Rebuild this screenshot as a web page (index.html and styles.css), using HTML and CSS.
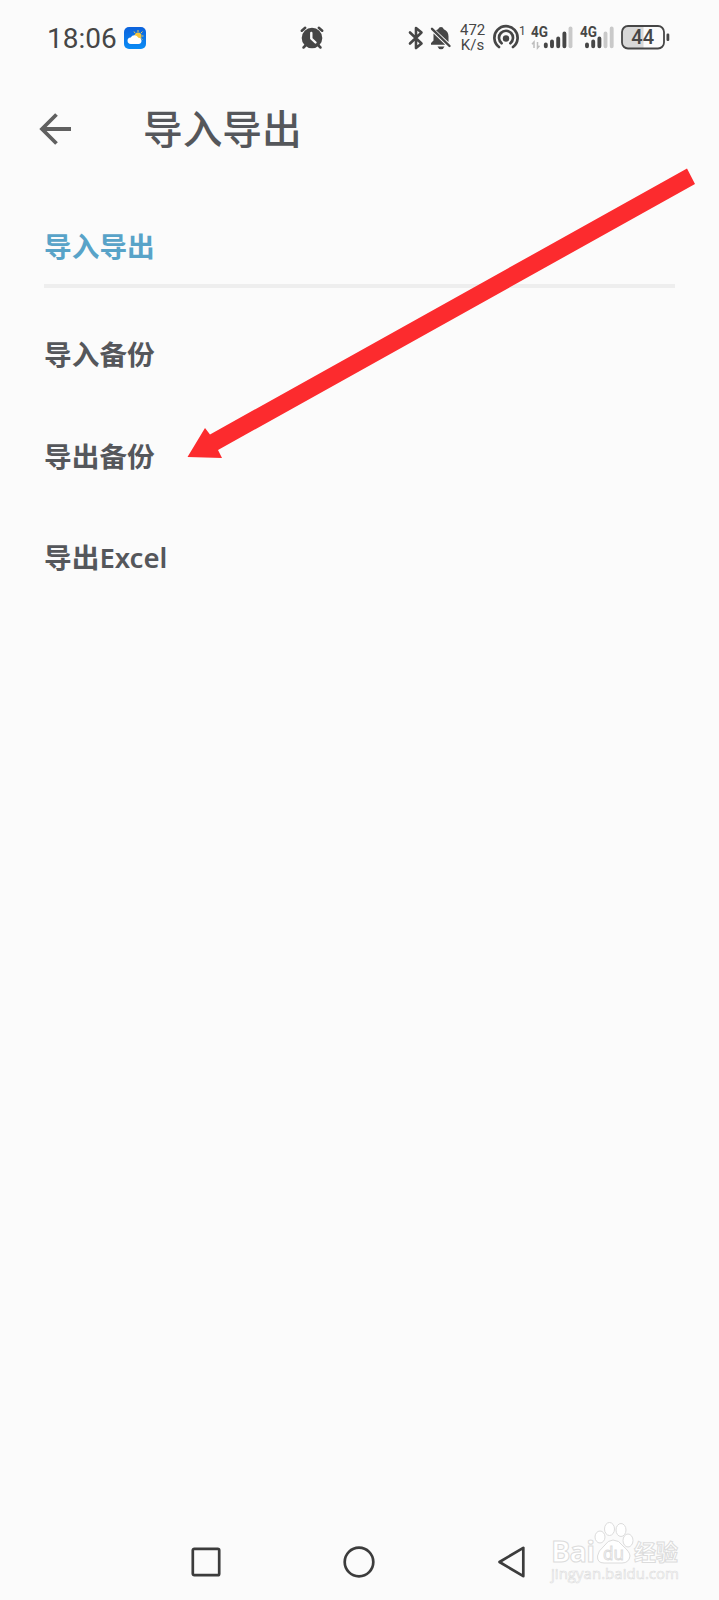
FILE: index.html
```html
<!DOCTYPE html>
<html lang="zh-CN">
<head>
  <meta charset="UTF-8">
  <meta name="viewport" content="width=device-width, initial-scale=1.0">
  <title>导入导出</title>
  <link rel="stylesheet" href="styles.css">
</head>
<body>
  <div class="screen">
    <div class="statusbar">
      <span class="time">18:06</span>
      <svg class="weather" width="22" height="22" viewBox="0 0 22 22">
        <defs>
          <linearGradient id="sky" x1="0" y1="0" x2="0" y2="1">
            <stop offset="0" stop-color="#0c62dc"/>
            <stop offset="1" stop-color="#0b8cf5"/>
          </linearGradient>
        </defs>
        <rect width="22" height="22" rx="5" fill="url(#sky)"/>
        <path d="M14 3v2M18.500 4.500l-1.500 1.500M19.500 9h-1.500M10 4.500l1 1.500M18.500 12.500l-1-1" stroke="#f5c84a" stroke-width="1"/>
        <circle cx="14" cy="9" r="3.500" fill="#f8c63d"/>
        <path d="M7 17a3.300 3.300 0 0 1-.3-6.600A4.300 4.300 0 0 1 14.300 10.800A3.100 3.100 0 0 1 14.500 17z" fill="#fff"/>
      </svg>
      <svg class="alarm" width="24" height="24" viewBox="0 0 24 24">
        <path d="M1.800 4.800L5.200 1.800M22.200 4.800L18.800 1.800M5.500 19.500L3.500 21.500M18.500 19.500L20.500 21.500" stroke="#464646" stroke-width="2.500" stroke-linecap="round"/>
        <circle cx="12" cy="12" r="10.300" fill="#464646"/>
        <path d="M11.300 7V12.500L15.500 16.500" fill="none" stroke="#fbfbfb" stroke-width="2.400" stroke-linecap="round"/>
      </svg>
      <div class="tray">
        <svg class="bluetooth" width="16" height="24" viewBox="0 0 16 24">
          <path d="M2 6.500L13.500 17.500L8 22V2L13.500 6.500L2 17.500" fill="none" stroke="#464646" stroke-width="2.600" stroke-linejoin="round" stroke-linecap="round"/>
        </svg>
        <svg class="bell" width="22" height="24" viewBox="0 0 22 24">
          <path d="M8 3.300Q9 1 11 1T13.800 3.300Q18.500 5.300 18.500 10.500V16L6 4.300Q7 3.600 8 3.300zM3.500 7.500L15.200 18.800H1V17L3.500 14.500z" fill="#464646"/>
          <path d="M2 2.800L19.500 20" stroke="#464646" stroke-width="2.400" stroke-linecap="round"/>
          <path d="M7.500 20.500h7q-1 2.800-3.500 2.800t-3.500-2.800z" fill="#464646"/>
        </svg>
        <div class="speed"><span>472</span><span>K/s</span></div>
        <svg class="hotspot" width="34" height="24" viewBox="0 0 34 24">
          <g fill="none" stroke="#464646" stroke-width="2.700" stroke-linecap="round">
            <path d="M6 21A11.600 11.600 0 1 1 20 21"/>
            <path d="M8.600 17.200A7 7 0 1 1 17.400 17.200"/>
          </g>
          <circle cx="13" cy="12.500" r="3.200" fill="#464646"/>
          <text x="26" y="9" class="tiny">1</text>
        </svg>
        <svg class="signal" width="42" height="26" viewBox="0 0 42 26">
          <text x="0" y="11.500" class="net" textLength="17" lengthAdjust="spacingAndGlyphs">4G</text>
          <path d="M3 23v-6l-2 2.200M6.500 17v6l2-2.200" fill="none" stroke="#bdbdbd" stroke-width="1.500"/>
          <g stroke="#464646" stroke-width="3.900" stroke-linecap="round">
            <path d="M14.800 19.500v1.700M21 16.500v4.700M27.200 13.500v7.700M33.400 8.500v12.700"/>
            <path d="M39.500 3.500v17.700" stroke="#c9c9c9"/>
          </g>
        </svg>
        <svg class="signal second" width="34" height="26" viewBox="0 0 34 26">
          <text x="0" y="11.500" class="net" textLength="17" lengthAdjust="spacingAndGlyphs">4G</text>
          <g stroke="#464646" stroke-width="3.900" stroke-linecap="round">
            <path d="M7 19.500v1.700M13.200 16.500v4.700M19.400 13.500v7.700"/>
            <path d="M25.500 8.500v12.700M31.700 3.500v17.700" stroke="#c9c9c9"/>
          </g>
        </svg>
        <svg class="battery" width="49" height="26" viewBox="0 0 49 26">
          <rect x="1" y="1" width="42" height="22.500" rx="6" fill="#fbfbfb"/>
          <path d="M7 1h15.500v22.500H7a6 6 0 0 1-6-6V7a6 6 0 0 1 6-6z" fill="#d8d8d8"/>
          <rect x="1" y="1" width="42" height="22.500" rx="6" fill="none" stroke="#464646" stroke-width="1.800"/>
          <rect x="45.500" y="8.500" width="2.800" height="7.500" rx="1.200" fill="#464646"/>
          <text x="21.700" y="19" class="level" textLength="23">44</text>
        </svg>
      </div>
    </div>

    <div class="header">
      <svg class="back" width="34" height="34" viewBox="0 0 34 34">
        <path d="M32 17H3M17.500 2.500L3 17L17.500 31.500" fill="none" stroke="#606060" stroke-width="3.800"/>
      </svg>
      <h1>导入导出</h1>
    </div>

    <div class="content">
      <h2>导入导出</h2>
      <ul class="list">
        <li>导入备份</li>
        <li>导出备份</li>
        <li>导出<span class="latin">Excel</span></li>
      </ul>
    </div>

    <div class="navbar">
      <svg width="32" height="32" viewBox="0 0 32 32"><rect x="2.800" y="2.800" width="26.400" height="26.400" rx="1.500"/></svg>
      <svg width="32" height="32" viewBox="0 0 32 32"><circle cx="16" cy="16" r="14.300"/></svg>
      <svg width="32" height="32" viewBox="0 0 32 32"><path d="M27.300 1.800V30.200L3.500 16z"/></svg>
    </div>

    <svg class="arrow" width="719" height="480" viewBox="0 0 719 480">
      <path d="M187.500 457L205 428L210 434.500L687 168.500L695 184L218 450L222 458z" fill="#fc2b2e"/>
    </svg>

    <svg class="watermark" width="140" height="70" viewBox="0 0 140 70">
      <text x="1" y="42" class="wm-logo" textLength="44">Bai</text>
      <g class="paw">
        <ellipse cx="50" cy="17" rx="5" ry="6"/>
        <ellipse cx="59.500" cy="9" rx="5" ry="6.500"/>
        <ellipse cx="71" cy="10" rx="5" ry="6.500"/>
        <ellipse cx="78" cy="20.500" rx="5" ry="6.500"/>
        <path d="M63 20Q69 20 73 26Q80 32 80 36Q79 43 72 43H54Q47 43 47.500 36Q48 31 54 26Q58 20 63 20z"/>
      </g>
      <text x="53" y="40" class="wm-du" textLength="21" lengthAdjust="spacingAndGlyphs">du</text>
      <text x="84" y="40" class="wm-cn" textLength="44">经验</text>
      <text x="1" y="59" class="wm-url" textLength="128">jingyan.baidu.com</text>
    </svg>
  </div>
</body>
</html>
```

FILE: styles.css
```css
* {
  box-sizing: border-box;
}
body {
  margin: 0;
  background: #fbfbfb;
  font-family: "Noto Sans", "Noto Sans CJK SC", sans-serif;
  color: #55575b;
}
.screen {
  position: relative;
  display: flex;
  flex-direction: column;
  height: 1600px;
  overflow: hidden;
}
svg {
  display: block;
  flex: none;
  overflow: visible;
}
.statusbar {
  display: flex;
  align-items: center;
  height: 75px;
  padding: 0 49px 0 47px;
  font-family: Roboto, sans-serif;
  color: #464646;
}
.time {
  width: 77px;
  font-size: 28px;
  line-height: 32px;
  padding-top: 2px;
}
.alarm {
  margin-left: 154px;
}
.tray {
  display: flex;
  align-items: center;
  margin-left: auto;
}
.bell {
  margin-left: 6px;
}
.speed {
  display: flex;
  flex-direction: column;
  width: 25px;
  margin: 0 8px;
  font-size: 15px;
  line-height: 15px;
  text-align: center;
}
.signal {
  margin-left: 4px;
}
.second {
  margin-left: 7px;
}
.battery {
  margin-left: 7px;
}
.tiny {
  font-size: 12px;
  fill: #464646;
}
.net {
  font-size: 15px;
  font-weight: 700;
  fill: #464646;
}
.level {
  font-size: 20px;
  font-weight: 500;
  text-anchor: middle;
  fill: #464646;
}
.header {
  display: flex;
  align-items: center;
  height: 108px;
  padding-left: 39px;
}
h1 {
  margin: 0 0 4px 70px;
  font-family: "Noto Sans CJK SC", sans-serif;
  font-size: 39.700px;
  font-weight: 500;
  line-height: 56px;
}
.content {
  flex: 1;
  padding: 22px 44px 0 44px;
  font-family: "Noto Sans CJK SC", sans-serif;
}
h2 {
  height: 83px;
  margin: 0;
  border-bottom: 4px solid #eee;
  font-size: 27.700px;
  font-weight: 700;
  line-height: 80px;
  color: #58a3c8;
}
.list {
  margin: 0;
  padding: 15px 0 0;
  list-style: none;
}
.list li {
  height: 101.500px;
  font-size: 27.700px;
  font-weight: 700;
  line-height: 101.500px;
}
.latin {
  font-family: "Noto Sans", sans-serif;
  font-weight: 600;
  font-size: 27.500px;
}
.navbar {
  display: flex;
  justify-content: center;
  gap: 121px;
  height: 54px;
  padding-right: 1px;
}
.navbar svg {
  fill: none;
  stroke: #3c3c3c;
  stroke-width: 2.700;
  stroke-linejoin: round;
}
.arrow {
  position: absolute;
  left: 0;
  top: 0;
}
.watermark {
  position: absolute;
  left: 550px;
  top: 1520px;
}
.watermark text,
.paw {
  fill: #fff;
  stroke: #dcdcdc;
  stroke-width: 1;
}
.watermark .wm-logo {
  font: 700 29px "Open Sans", sans-serif;
}
.watermark .wm-du {
  font: 400 19px "Open Sans", sans-serif;
}
.watermark .wm-cn {
  font: 700 22px "Noto Sans CJK SC", sans-serif;
}
.watermark .wm-url {
  font: 400 15px "Open Sans", sans-serif;
  stroke-width: 0.600;
}
```
